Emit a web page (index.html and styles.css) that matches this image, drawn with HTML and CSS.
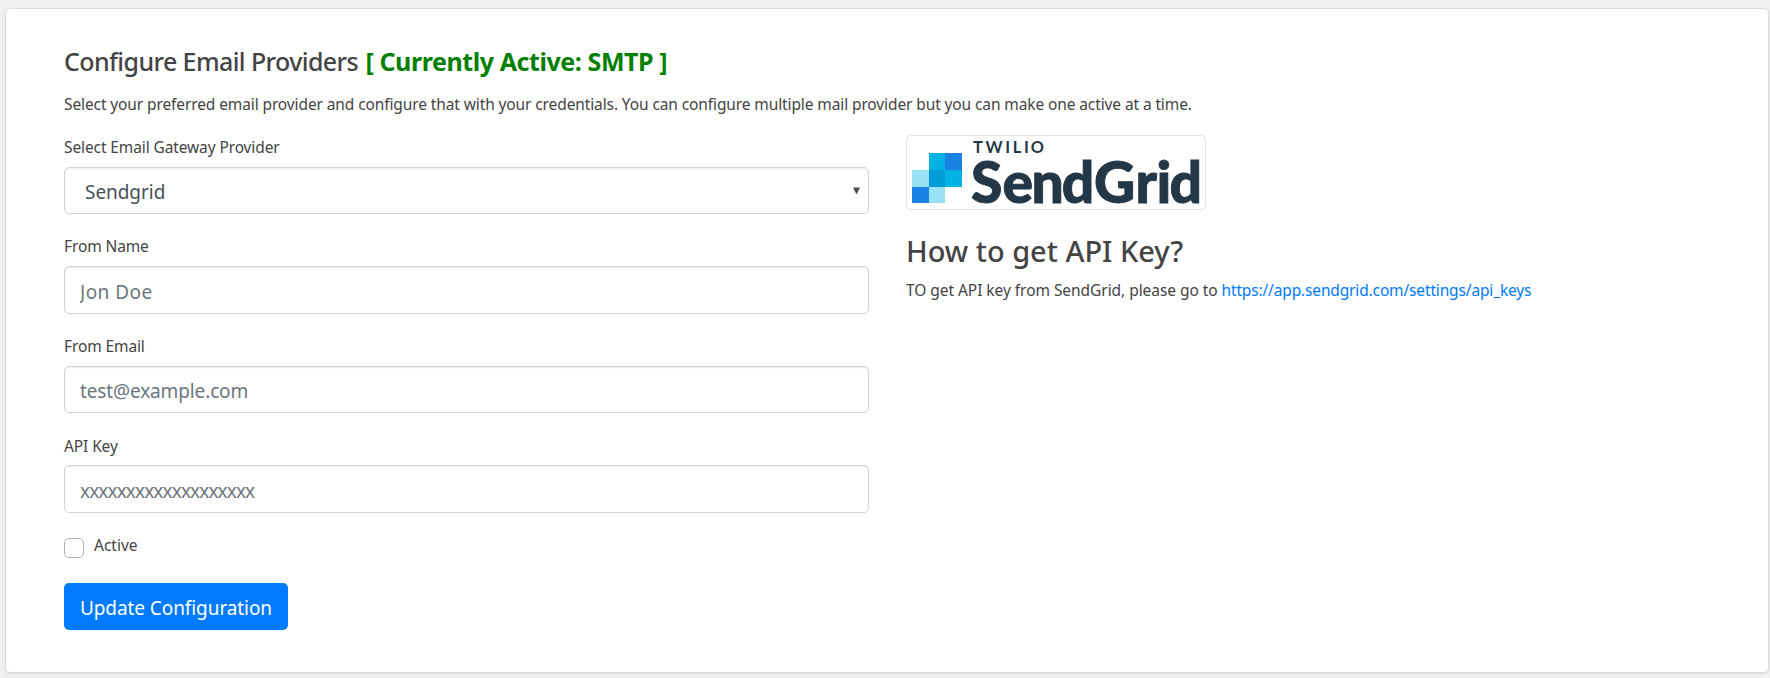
FILE: index.html
```html
<!DOCTYPE html>
<html lang="en">
<head>
<meta charset="utf-8">
<title>Configure Email Providers</title>
<link rel="stylesheet" href="styles.css">
</head>
<body>
<main class="card">
  <h1 class="title"><span class="title-main">Configure Email Providers</span> <strong class="title-active">[ Currently Active: SMTP ]</strong></h1>
  <p class="intro">Select your preferred email provider and configure that with your credentials. You can configure multiple mail provider but you can make one active at a time.</p>
  <div class="columns">
    <form class="form">
      <label class="label" for="gateway">Select Email Gateway Provider</label>
      <div class="control select" id="gateway"><span class="select-text">Sendgrid</span><svg class="caret" width="7" height="8" viewBox="0 0 7 8"><path d="M0 .5h7L3.5 7.5z"/></svg></div>
      <label class="label" for="name">From Name</label>
      <input class="control name" id="name" type="text" placeholder="Jon Doe">
      <label class="label" for="email">From Email</label>
      <input class="control email" id="email" type="text" placeholder="test@example.com">
      <label class="label label-key" for="key">API Key</label>
      <input class="control key" id="key" type="text" placeholder="xxxxxxxxxxxxxxxxxxx">
      <label class="check"><input class="checkbox" type="checkbox"><span class="check-text">Active</span></label>
      <button class="button" type="button">Update Configuration</button>
    </form>
    <section class="help">
      <svg class="logo" width="300" height="75" viewBox="906 135 300 75" role="img" aria-label="Twilio SendGrid">
        <rect x="906.5" y="135.5" width="299" height="74" rx="4" fill="#fff" stroke="#dee2e6"/>
        <g shape-rendering="crispEdges">
          <path fill="#99e1f4" d="M912 170h17v17h-17zM929 187h16v16h-16z"/>
          <path fill="#1a82e2" d="M912 187h17v16h-17zM945 153h17v17h-17z"/>
          <path fill="#00b3e3" d="M929 153h16v17h-16zM945 170h17v17h-17z"/>
          <path fill="#009dd9" d="M929 170h16v17h-16z"/>
        </g>
        <text class="logo-top" x="973 985.5 1005.3 1012.7 1024 1030.7" y="153">TWILIO</text>
        <text class="logo-name" x="971 1002.5 1031.5 1061.7 1094 1135.5 1156.5 1169.5" y="203.3">SendGrid</text>
      </svg>
      <h2 class="help-title">How to get API Key?</h2>
      <p class="help-text"><span class="help-lead">TO get API key from SendGrid, please go to</span> <a class="link" href="#">https://app.sendgrid.com/settings/api_keys</a></p>
    </section>
  </div>
</main>
</body>
</html>
```
FILE: styles.css
```css
* { box-sizing: border-box; }
body {
  margin: 0;
  padding: 8px 1px 0 5px;
  height: 678px;
  overflow: hidden;
  background: #f0f0f0;
  color: #444;
  font: 15.5px/24px "Noto Sans", "Open Sans", sans-serif;
  letter-spacing: -.11px;
}
.card {
  height: 665px;
  padding: 37px 58px 0;
  background: #fff;
  border: 1px solid #dcdcdc;
  border-radius: 5px;
  box-shadow: 0 1px 2px rgba(0, 0, 0, .08);
}
.title {
  margin: 0 0 16px;
  font-size: 25px;
  line-height: 30px;
  font-weight: 500;
  letter-spacing: -.6px;
  white-space: nowrap;
}
.title-active { margin-left: 1.5px; color: green; font-weight: 700; letter-spacing: -.42px; }
.intro { margin: 0 0 19px; white-space: nowrap; }
.columns {
  display: grid;
  grid-template-columns: 805px 1fr;
  column-gap: 37px;
}
.form { display: flex; flex-direction: column; align-items: flex-start; }
.label { display: block; margin-bottom: 8px; }
.label-key { padding-top: 1px; margin-bottom: 7px; }
.control {
  width: 805px;
  height: 47.33px;
  margin: 0 0 20px;
  padding: 4px 15px 0;
  border: 1px solid #ced4da;
  border-radius: 5px;
  background: #fff;
  box-shadow: inset 0 1px 2px rgba(0, 0, 0, .07);
  color: #495057;
  font: 19px/40px "Noto Sans", "Open Sans", sans-serif;
}
.control::placeholder { color: #6c757d; opacity: 1; }
.name { letter-spacing: .45px; }
.email { letter-spacing: -.13px; }
.key { height: 48px; letter-spacing: -.88px; }
.select {
  display: flex;
  align-items: center;
  justify-content: space-between;
  padding: 2px 8px 0 20px;
  letter-spacing: -.05px;
}
.caret { margin-top: -2px; fill: #495057; }
.check { display: flex; gap: 10px; margin-bottom: 25px; letter-spacing: 0; }
.checkbox {
  appearance: none;
  width: 20px;
  height: 20px;
  margin: 5px 0 0;
  border: 1px solid #adb5bd;
  border-radius: 5px;
  background: #fff;
}
.check-text { height: 24px; }
.button {
  width: 224px;
  height: 47px;
  padding: 3px 0 0;
  border: 0;
  border-radius: 5px;
  background: #007bff;
  color: #fff;
  font: 19px/40px "Noto Sans", "Open Sans", sans-serif;
  letter-spacing: -.08px;
  white-space: nowrap;
}
.logo { display: block; overflow: visible; letter-spacing: 0; }
.logo-top { font: 700 16.3px Lato, sans-serif; fill: #233746; }
.logo-name { font: 900 57px Lato, sans-serif; fill: #233746; stroke: #233746; stroke-width: .9px; }
.help-title {
  margin: 23px 0 9px;
  font-size: 29px;
  line-height: 36px;
  font-weight: 500;
  letter-spacing: 0;
}
.help-text { margin: 0; letter-spacing: -.15px; white-space: nowrap; }
.help-lead { letter-spacing: -.05px; }
.link { color: #007bff; text-decoration: none; }
```
